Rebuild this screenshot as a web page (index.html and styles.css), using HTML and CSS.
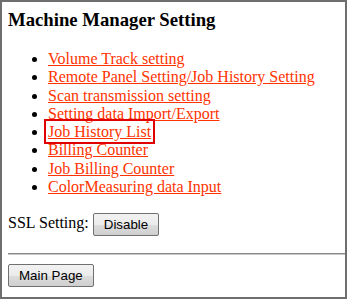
FILE: index.html
```html
<!DOCTYPE html>
<html lang="en">
<head>
    <meta charset="UTF-8">
    <title>Machine Manager Setting</title>
    <link rel="stylesheet" href="styles.css">
</head>
<body>
    <div class="marco">
        <h3 class="titulo">Machine Manager Setting</h3>
        <ul class="menu">
            <li><a href="#">Volume Track setting</a></li>
            <li><a href="#">Remote Panel Setting/Job History Setting</a></li>
            <li><a href="#">Scan transmission setting</a></li>
            <li><a href="#">Setting data Import/Export</a></li>
            <li><a href="#" class="marcado">Job History List</a></li>
            <li><a href="#">Billing Counter</a></li>
            <li><a href="#">Job Billing Counter</a></li>
            <li><a href="#">ColorMeasuring data Input</a></li>
        </ul>
        <p class="ssl">SSL Setting: <button class="boton">Disable</button></p>
        <hr class="linea">
        <div class="pie">
            <button class="boton">Main Page</button>
        </div>
    </div>
</body>
</html>
```
FILE: styles.css
```css
html, body {
    margin: 0;
    padding: 0;
    height: 100%;
    background: #fff;
}
body {
    font-family: "Liberation Serif", "Times New Roman", serif;
    font-size: 16px;
    color: #000;
}
.marco {
    box-sizing: border-box;
    height: 100%;
    border: 2px solid #6e6e6e;
    padding: 7px 0 0 6px;
}
.titulo {
    margin: 0 0 19px 0;
    font-size: 18.72px;
    font-weight: bold;
}
.menu {
    margin: 0;
    padding-left: 40px;
    line-height: 18.3px;
}
.menu a {
    color: #ff3300;
}
.marcado {
    outline: 2px solid #e00000;
    outline-offset: 2px;
}
.ssl {
    margin: 17px 0 17px 0;
}
.boton {
    font-family: "Liberation Sans", Arial, sans-serif;
    font-size: 13.33px;
    color: #000;
    height: 23px;
    padding: 1px 10px;
    border: 1px solid #707070;
    border-radius: 2px;
    background: linear-gradient(#f2f2f2 0%, #ebebeb 50%, #dddddd 51%, #cfcfcf 100%);
    vertical-align: middle;
}
.linea {
    margin: 0;
    border: 0;
    border-top: 1px solid #8a8a8a;
    border-bottom: 1px solid #c8c8c8;
}
.pie {
    padding-top: 9px;
}
```
